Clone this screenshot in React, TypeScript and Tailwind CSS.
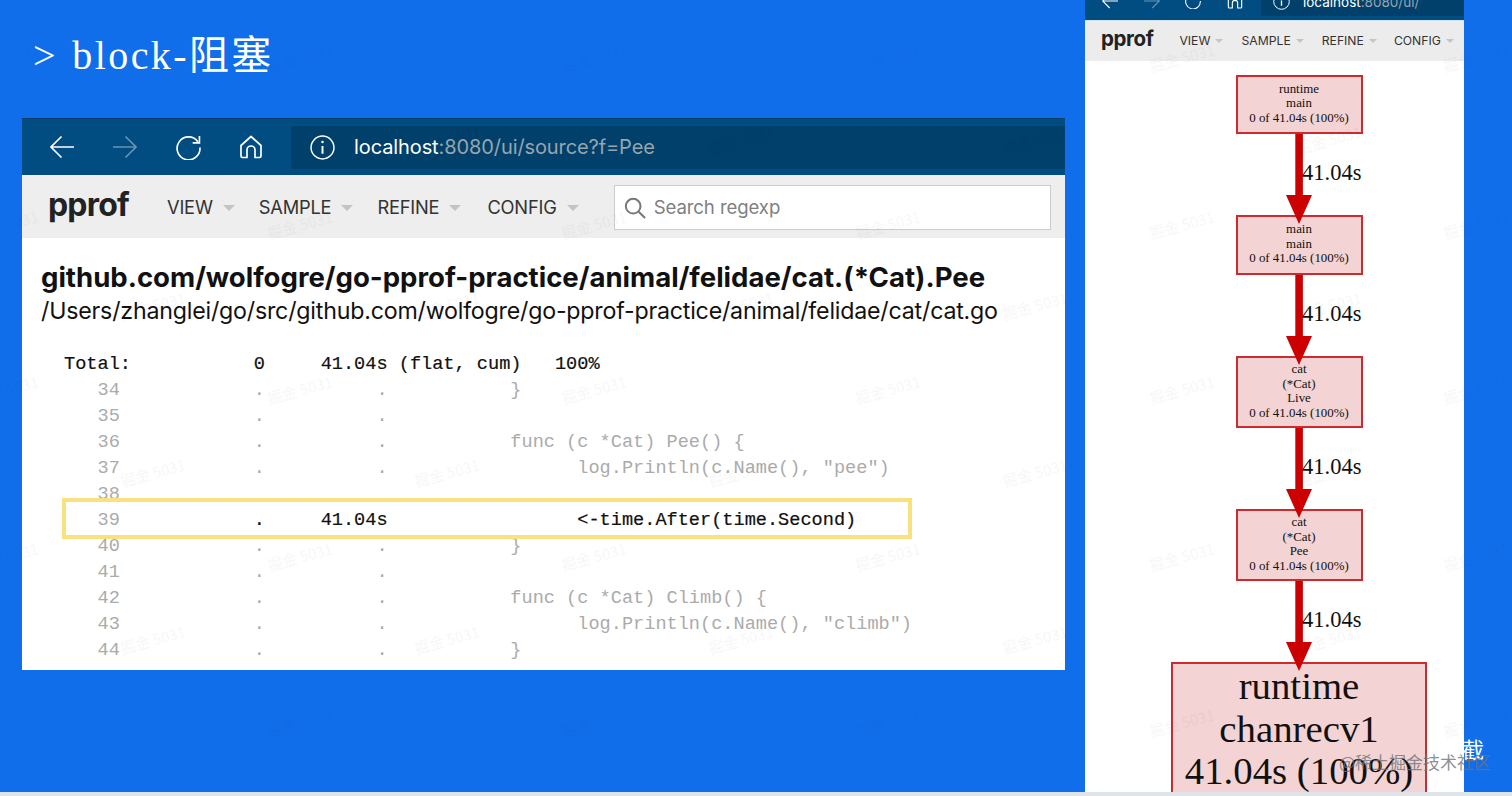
import React from "react";

const sans = "font-['Inter','Noto_Sans_CJK_SC',sans-serif]";

function Caret({ className }: { className: string }) {
  return (
    <svg className={className} viewBox="0 0 12 6" aria-hidden="true">
      <path d="M0 0h12L6 6z" fill="#c4c4c4" />
    </svg>
  );
}

function BackIcon({ size, opacity = 1, flip = false }: { size: number; opacity?: number; flip?: boolean }) {
  return (
    <svg width={size} height={size} viewBox="0 0 24 24" fill="none" stroke="#fff" strokeWidth="1.6" opacity={opacity} style={flip ? { transform: "scaleX(-1)" } : undefined} aria-hidden="true">
      <path d="M1 12h23M11.5 1.5 1 12l10.5 10.5" />
    </svg>
  );
}

function ReloadIcon({ size }: { size: number }) {
  return (
    <svg width={size} height={size} viewBox="0 0 24 24" fill="none" stroke="#fff" strokeWidth="1.6" aria-hidden="true">
      <path d="M21 6.5A11 11 0 1 0 23 12" />
      <path d="M22.5 1v6.5H16" />
    </svg>
  );
}

function HomeIcon({ size }: { size: number }) {
  return (
    <svg width={size} height={size} viewBox="0 0 24 24" fill="none" stroke="#fff" strokeWidth="1.7" strokeLinejoin="round" aria-hidden="true">
      <path d="M12 1.5 2 10.5V21a1.5 1.5 0 0 0 1.5 1.5H8V15a4 4 0 0 1 8 0v7.5h4.5A1.5 1.5 0 0 0 22 21V10.5z" />
    </svg>
  );
}

function InfoIcon({ size }: { size: number }) {
  return (
    <svg width={size} height={size} viewBox="0 0 24 24" fill="none" stroke="#fff" strokeWidth="1.4" aria-hidden="true">
      <circle cx="12" cy="12" r="11" />
      <path d="M12 10.5V18" strokeWidth="1.9" />
      <circle cx="12" cy="6.8" r="1.2" fill="#fff" stroke="none" />
    </svg>
  );
}

function BrowserBar({ url, rest, large }: { url: string; rest: string; large: boolean }) {
  if (large) {
    return (
      <div className="flex h-[57px] shrink-0 items-center border-t border-[#013a66] bg-[#014d82] pl-[28px]">
        <BackIcon size={24} />
        <div className="ml-[39px]"><BackIcon size={24} opacity={0.4} flip /></div>
        <div className="ml-[39px]"><ReloadIcon size={25} /></div>
        <div className="ml-[38px]"><HomeIcon size={24} /></div>
        <div className="ml-[28px] flex h-[43px] flex-1 items-center rounded-l-[4px] bg-[#00406b] pl-[19px]">
          <InfoIcon size={25} />
          <span className={`ml-[19px] text-[20px] tracking-[-0.1px] ${sans} text-white`}>
            {url}<span className="text-[#98a5ae]">{rest}</span>
          </span>
        </div>
      </div>
    );
  }
  return (
    <div className="flex h-[21px] shrink-0 items-end overflow-hidden border-b border-[#cfe3ee] bg-[#014d82] pl-[17px]">
      <div className="mb-[11px] flex items-center">
        <BackIcon size={16} />
        <div className="ml-[26px]"><BackIcon size={16} opacity={0.4} flip /></div>
        <div className="ml-[25px]"><ReloadIcon size={16} /></div>
        <div className="ml-[26px]"><HomeIcon size={16} /></div>
      </div>
      <div className="ml-[18px] flex h-[16px] flex-1 items-end self-start rounded-l-[3px] bg-[#00406b] pl-[12px]">
        <div className="mb-[4px] flex items-center">
          <InfoIcon size={17} />
          <span className={`ml-[13px] text-[13.5px] ${sans} text-white`}>
            {url}<span className="text-[#98a5ae]">{rest}</span>
          </span>
        </div>
      </div>
    </div>
  );
}

const leftMenu = [
  { label: "VIEW", gap: "ml-[38px]" },
  { label: "SAMPLE", gap: "ml-[24px]" },
  { label: "REFINE", gap: "ml-[24px]" },
  { label: "CONFIG", gap: "ml-[26px]" },
];

const rightMenu = [
  { label: "VIEW", gap: "ml-[26px]" },
  { label: "SAMPLE", gap: "ml-[18px]" },
  { label: "REFINE", gap: "ml-[18px]" },
  { label: "CONFIG", gap: "ml-[17px]" },
];

function SourceWindow() {
  return (
    <section className="flex h-[552px] w-[1043px] flex-col overflow-hidden bg-white">
      <BrowserBar url="localhost" rest=":8080/ui/source?f=Pee" large />
      <nav className="flex h-[63px] shrink-0 items-center bg-[#eeeeee] pt-[2px] pl-[26px]">
        <span className={`mb-[5px] text-[32px] leading-none font-bold tracking-[-0.8px] text-[#222] ${sans}`}>pprof</span>
        {leftMenu.map((m) => (
          <div key={m.label} className={`flex items-center ${m.gap}`}>
            <span className={`text-[18.3px] tracking-[-0.2px] text-[#333] ${sans}`}>{m.label}</span>
            <Caret className="ml-[10px] h-[6px] w-[12px]" />
          </div>
        ))}
        <div className="ml-[35px] flex h-[45px] w-[437px] items-center border border-[#cccccc] bg-white pl-[9px]">
          <svg width="22" height="22" viewBox="0 0 24 24" fill="none" stroke="#777" strokeWidth="2.2" aria-hidden="true">
            <circle cx="10" cy="10" r="8" />
            <path d="m16 16 7 7" />
          </svg>
          <span className={`ml-[8px] text-[18.6px] tracking-[-0.1px] text-[#808080] ${sans}`}>Search regexp</span>
        </div>
      </nav>
      <div className="shrink-0 pt-[21px] pl-[19px]">
        <h1 className={`text-[27.55px] leading-[36px] font-bold whitespace-nowrap text-[#111] ${sans}`}>
          github.com/wolfogre/go-pprof-practice/animal/felidae/cat.(*Cat).Pee
        </h1>
        <p className={`text-[23.2px] leading-[32px] tracking-[-0.2px] whitespace-nowrap text-[#111] ${sans}`}>
          /Users/zhanglei/go/src/github.com/wolfogre/go-pprof-practice/animal/felidae/cat/cat.go
        </p>
      </div>
      <CodeListing />
    </section>
  );
}

const codeBefore = [
  "   34            .          .           }",
  "   35            .          .",
  "   36            .          .           func (c *Cat) Pee() {",
  "   37            .          .                 log.Println(c.Name(), \"pee\")",
  "   38",
];

const codeAfter = [
  "   40            .          .           }",
  "   41            .          .",
  "   42            .          .           func (c *Cat) Climb() {",
  "   43            .          .                 log.Println(c.Name(), \"climb\")",
  "   44            .          .           }",
];

function CodeListing() {
  const rowClass = "h-[26px] leading-[26px] whitespace-pre";
  return (
    <div className="mt-[25px] shrink-0 pl-[42px] font-['Liberation_Mono',monospace] text-[18.6px] text-[#ababab]">
      <div className={`${rowClass} text-[#111] [-webkit-text-stroke:0.2px_#111]`}>
        {"Total:           0     41.04s (flat, cum)   100%"}
      </div>
      {codeBefore.map((r) => (
        <div key={r} className={rowClass}>{r}</div>
      ))}
      <div className="relative z-[1] -mt-[10px] -mb-[5px] -ml-[2px] flex h-[41px] w-[850px] items-center border-[4px] border-[#fae17f] bg-white pt-[5px]">
        <div className="-ml-[2px] whitespace-pre">
          <span>{"   39"}</span>
          <span className="text-[#111] [-webkit-text-stroke:0.2px_#111]">{"            .     41.04s                 <-time.After(time.Second)"}</span>
        </div>
      </div>
      {codeAfter.map((r) => (
        <div key={r} className={rowClass}>{r}</div>
      ))}
    </div>
  );
}

function GraphNode({ lines, height }: { lines: string[]; height: string }) {
  return (
    <div className={`flex w-[127px] shrink-0 flex-col items-center justify-center border-2 border-[#cf2a2e] bg-[#f3d3d3] pb-[2px] text-[12.9px] leading-[14.5px] text-[#111] ${height}`}>
      {lines.map((l, i) => (
        <div key={i}>{l}</div>
      ))}
    </div>
  );
}

function GraphEdge({ height }: { height: string }) {
  return (
    <div className={`grid w-[127px] shrink-0 grid-cols-[1fr_26px_1fr] ${height}`}>
      <div />
      <svg className="relative z-10 h-full w-[26px] overflow-visible" viewBox="0 0 26 81" aria-hidden="true">
        <path d="M9.3 0h7.6v61H26L13 90 0 61h9.3z" fill="#cc0000" />
      </svg>
      <span className="relative z-10 -ml-[10px] self-center pb-[2px] text-[22.5px] leading-none text-[#111]">41.04s</span>
    </div>
  );
}

function GraphPanel() {
  return (
    <aside className="flex w-[379px] flex-col overflow-hidden bg-white">
      <BrowserBar url="localhost" rest=":8080/ui/" large={false} />
      <nav className="flex h-[40px] shrink-0 items-center bg-[#ececec] pl-[16px]">
        <span className={`mb-[3px] text-[20.5px] leading-none font-bold tracking-[-0.4px] text-[#222] ${sans}`}>pprof</span>
        {rightMenu.map((m) => (
          <div key={m.label} className={`flex items-center ${m.gap}`}>
            <span className={`text-[12.2px] text-[#333] ${sans}`}>{m.label}</span>
            <Caret className="ml-[5px] h-[4px] w-[8px]" />
          </div>
        ))}
      </nav>
      <div className="flex flex-col items-center pt-[14px] pl-[49px] font-['Liberation_Serif',serif]">
        <GraphNode lines={["runtime", "main", "0 of 41.04s (100%)"]} height="h-[59px]" />
        <GraphEdge height="h-[81px]" />
        <GraphNode lines={["main", "main", "0 of 41.04s (100%)"]} height="h-[60px]" />
        <GraphEdge height="h-[81px]" />
        <GraphNode lines={["cat", "(*Cat)", "Live", "0 of 41.04s (100%)"]} height="h-[72px]" />
        <GraphEdge height="h-[81px]" />
        <GraphNode lines={["cat", "(*Cat)", "Pee", "0 of 41.04s (100%)"]} height="h-[72px]" />
        <GraphEdge height="h-[81px]" />
        <div className="flex h-[160px] w-[256px] shrink-0 flex-col items-center border-2 border-[#cf2a2e] bg-[#f3d3d3] pt-[1px] text-[38.8px] leading-[42.5px] whitespace-nowrap text-[#111]">
          <div>runtime</div>
          <div>chanrecv1</div>
          <div>41.04s (100%)</div>
        </div>
      </div>
    </aside>
  );
}

const marks: { x: number; y: number }[] = [];
[58, 225, 390, 557, 723].forEach((y) => [6, 300, 594, 888, 1182, 1476].forEach((x) => marks.push({ x, y })));
[140, 306, 473, 640].forEach((y) => [153, 447, 741, 1035, 1329].forEach((x) => marks.push({ x, y })));

function Watermarks() {
  return (
    <div className="pointer-events-none absolute inset-0 z-20 overflow-hidden">
      {marks.map((m, i) => (
        <span
          key={i}
          className="absolute -translate-x-1/2 -translate-y-1/2 -rotate-[15deg] font-['Noto_Sans_CJK_SC',sans-serif] text-[15px] whitespace-nowrap text-[#000000]/[0.04] blur-[0.6px]"
          style={{ left: m.x, top: m.y }}
        >
          掘金 5031
        </span>
      ))}
    </div>
  );
}

export default function App() {
  return (
    <div className="relative flex h-[796px] w-[1512px] flex-col overflow-hidden bg-[#116eeb]">
      <main className="flex min-h-0 flex-1">
        <div className="w-[1085px] shrink-0 pl-[22px]">
          <header className="flex h-[118px] items-start pt-[30px] pl-[11px]">
            <h2 className="font-['Liberation_Serif','Noto_Sans_CJK_SC',serif] text-[40px] leading-[52px] font-normal tracking-[2.4px] [word-spacing:2px] text-white">
              &gt; block-阻塞
            </h2>
          </header>
          <SourceWindow />
        </div>
        <GraphPanel />
      </main>
      <div className="h-[4px] shrink-0 bg-[#dfe4e8]" />
      <Watermarks />
      <span className="absolute top-[734px] left-[1462px] z-30 font-['Noto_Sans_CJK_SC',sans-serif] text-[22px] leading-[28px] text-white">截</span>
      <span className="absolute top-[751px] left-[1339px] z-30 font-['Noto_Sans_CJK_SC',sans-serif] text-[17px] leading-[22px] whitespace-nowrap text-[#6f7276]/80">@稀土掘金技术社区</span>
    </div>
  );
}
